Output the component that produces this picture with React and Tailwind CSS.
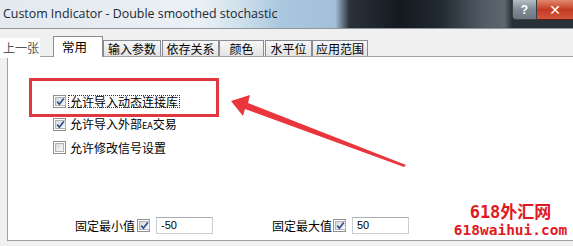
import React from "react";

function Check({ checked }) {
  return (
    <span className="w-[13px] h-[13px] border border-[#8e8f8f] bg-white p-[1px] flex shrink-0">
      <span className="flex-1 bg-gradient-to-br from-[#d8d9db] to-[#f9f9f9] border border-[#b0b4ba] flex items-center justify-center">
        {checked && (
          <svg width="9" height="9" viewBox="0 0 9 9">
            <path d="M1.2 4.6 L3.4 7.2 L7.8 1.4" stroke="#2d4f8e" strokeWidth="1.7" fill="none" />
          </svg>
        )}
      </span>
    </span>
  );
}

function Tab({ label, w }) {
  return (
    <div
      className={`${w} h-[16px] border-t border-l border-r border-[#898c95] bg-gradient-to-b from-[#f7f7f7] to-[#e3e3e3] flex items-center justify-center text-[12px] leading-none text-black`}
    >
      {label}
    </div>
  );
}

export default function App() {
  const cjk = { fontFamily: '"Noto Sans CJK SC", "Noto Sans", sans-serif' };
  return (
    <div
      className="relative w-[573px] h-[246px] overflow-hidden bg-[#f0f0f0] flex flex-col"
      style={cjk}
    >
      {/* title bar */}
      <div className="h-[29px] shrink-0 flex border-b border-[#8e98a2] bg-[linear-gradient(to_right,#e4e9ee_0%,#eaf0f5_35%,#cfe0ec_42%,#a9c7de_49%,#a4c0d8_58.5%,#2a3139_61%,#14191f_70%,#222a32_77%,#4f5a64_84%,#5e6770_88%,#2a3038_89.4%)]">
        <div
          className="flex-1 pl-[3px] pt-[6px] text-[12.4px] leading-[16px] text-[#1b2733]"
          style={{ fontFamily: '"Open Sans", "Noto Sans", sans-serif' }}
        >
          Custom Indicator - Double smoothed stochastic
        </div>
        <div className="flex items-start">
          <div className="w-[25px] h-[20px] border border-[#3a3f45] border-t-0 rounded-bl-[4px] bg-gradient-to-b from-[#b4bcc4] via-[#7f8a94] to-[#6b7680] flex items-center justify-center text-white text-[12px] font-bold leading-none" style={{ fontFamily: '"Liberation Sans", sans-serif' }}>
            ?
          </div>
          <div className="w-[36px] h-[20px] border-b border-[#5a2016] bg-gradient-to-b from-[#e0876d] via-[#c43a22] to-[#d4553a] flex items-center justify-center text-white text-[14px] font-bold leading-none" style={{ fontFamily: '"DejaVu Sans", sans-serif' }}>
            ✕
          </div>
        </div>
      </div>

      {/* tab band */}
      <div className="h-[27px] shrink-0 flex items-end">
        <div className="relative z-10 w-[40px] h-[20px] mb-[-2px] bg-white pl-[3px] pt-[3px] text-[12px] leading-[14px] text-[#555]">
          上一张
        </div>
        <div className="relative z-10 ml-[13px] w-[50px] h-[21px] mb-[-1px] border-t border-l border-r border-[#898c95] bg-white pl-[8px] pt-[2px] text-[12.5px] leading-[16px] text-black">
          常用
        </div>
        <Tab label="输入参数" w="w-[58px]" />
        <div className="ml-[1px]" />
        <Tab label="依存关系" w="w-[57px]" />
        <Tab label="颜色" w="w-[45px]" />
        <div className="ml-[1px]" />
        <Tab label="水平位" w="w-[47px]" />
        <Tab label="应用范围" w="w-[56px]" />
      </div>

      {/* panel */}
      <div className="ml-[7px] h-[185px] shrink-0 border-t border-l border-b border-[#a0a0a0] bg-white flex flex-col text-[12px] text-black">
        <div className="pt-[33px] pl-[45px] flex flex-col">
          <div className="h-[23px] flex items-center">
            <Check checked />
            <span className="ml-[2px] px-[1px] border border-dotted border-[#333] leading-[11px]">允许导入动态连接库</span>
          </div>
          <div className="h-[23px] flex items-center">
            <Check checked />
            <span className="ml-[4px] leading-[12px]">
              允许导入外部<span className="text-[9px]">EA</span>交易
            </span>
          </div>
          <div className="h-[23px] flex items-center">
            <Check />
            <span className="ml-[4px] leading-[12px]">允许修改信号设置</span>
          </div>
        </div>
        <div className="mt-auto pb-[6px] pl-[67px] flex items-center">
          <span className="w-[60px] leading-[14px]">固定最小值</span>
          <span className="ml-[2px]"><Check checked /></span>
          <div className="ml-[6px] w-[57px] h-[17px] border border-[#c9cdd4] border-t-[#abadb3] flex items-center pl-[4px] text-[11px]" style={{ fontFamily: '"Liberation Sans", sans-serif' }}>
            -50
          </div>
          <span className="ml-[59px] w-[60px] leading-[14px]">固定最大值</span>
          <span className="ml-[1px]"><Check checked /></span>
          <div className="ml-[6px] w-[57px] h-[17px] border border-[#c9cdd4] border-t-[#abadb3] flex items-center pl-[4px] text-[11px]" style={{ fontFamily: '"Liberation Sans", sans-serif' }}>
            50
          </div>
        </div>
      </div>

      {/* red highlight box overlay */}
      <div className="absolute left-[29px] top-[78px] w-[190px] h-[39px] border-[3px] border-[#e0383f]" />

      {/* arrow overlay */}
      <svg className="absolute left-0 top-0 pointer-events-none" width="573" height="246" viewBox="0 0 573 246">
        <polygon
          points="231,101 250,95 248,103 406,165 404,167 245,109 243,116"
          fill="#e8363c"
        />
      </svg>

      {/* watermark */}
      <div className="absolute left-[448px] top-[203px] w-[125px] h-[37px] bg-white flex flex-col items-center text-[#de1b24]">
        <div className="text-[17px] leading-[18px] font-semibold" style={{ fontFamily: '"DejaVu Sans Mono", "Noto Sans CJK SC", monospace' }}>
          618外汇网
        </div>
        <div className="text-[14.5px] leading-[18px] font-bold" style={{ fontFamily: '"DejaVu Sans Mono", monospace' }}>
          618waihui.com
        </div>
      </div>
    </div>
  );
}
